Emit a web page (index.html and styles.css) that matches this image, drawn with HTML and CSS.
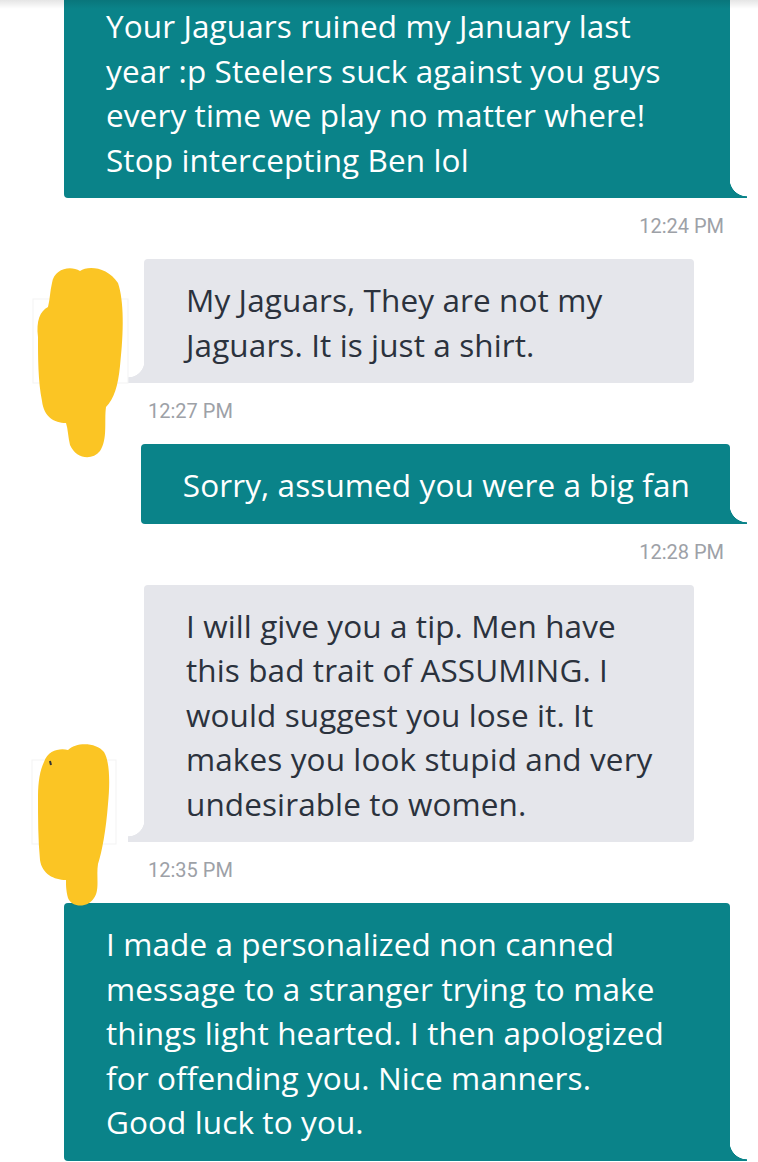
FILE: index.html
```html
<!DOCTYPE html>
<html>
<head>
<meta charset="utf-8">
<link rel="stylesheet" href="styles.css">
</head>
<body>
<div class="shade"></div>
<div class="chat">
  <div class="row out">
    <div class="bubble out first">Your Jaguars ruined my January last<br>year :p Steelers suck against you guys<br>every time we play no matter where!<br>Stop intercepting Ben lol</div>
  </div>
  <div class="time out">12:24 PM</div>

  <div class="row in">
    <svg class="avatar a1" width="100" height="200" viewBox="0 0 100 200">
      <rect x="3" y="38" width="95" height="84" fill="none" stroke="#f3f3f3" stroke-width="1"/>
      <path fill="#fbc524" d="M22 22 C24 8 40 4 50 10 C58 4 78 6 88 22 C94 40 94 70 90 105 C88 125 84 138 76 146 C74 160 78 178 70 190 C62 200 46 198 40 184 C38 176 38 168 36 162 C24 162 14 156 12 140 C8 120 8 96 8 76 C6 60 10 50 18 46 C20 38 20 30 22 22 Z"/>
    </svg>
    <div class="bubble in">My Jaguars, They are not my<br>Jaguars. It is just a shirt.</div>
  </div>
  <div class="time in">12:27 PM</div>

  <div class="row out">
    <div class="bubble out">Sorry, assumed you were a big fan</div>
  </div>
  <div class="time out">12:28 PM</div>

  <div class="row in">
    <svg class="avatar a2" width="90" height="170" viewBox="0 0 90 170">
      <rect x="2" y="20" width="84" height="84" fill="none" stroke="#f3f3f3" stroke-width="1"/>
      <path fill="#fbc524" d="M14 22 C18 10 30 8 38 10 C46 2 66 2 74 12 C80 22 80 44 78 64 C76 90 72 112 68 124 C66 136 70 150 64 158 C58 168 42 168 38 158 C36 150 36 146 36 140 C24 140 12 134 10 120 C8 100 8 78 8 56 C8 42 10 30 14 22 Z"/>
      <path d="M20 21 L21 25" stroke="#333" stroke-width="2"/>
    </svg>
    <div class="bubble in">I will give you a tip. Men have<br>this bad trait of ASSUMING. I<br>would suggest you lose it. It<br>makes you look stupid and very<br>undesirable to women.</div>
  </div>
  <div class="time in">12:35 PM</div>

  <div class="row out">
    <div class="bubble out wide">I made a personalized non canned<br>message to a stranger trying to make<br>things light hearted. I then apologized<br>for offending you. Nice manners.<br>Good luck to you.</div>
  </div>
</div>
</body>
</html>
```
FILE: styles.css
```css
html, body {
  margin: 0;
  padding: 0;
  background: #ffffff;
}
body {
  width: 758px;
  height: 1162px;
  overflow: hidden;
  position: relative;
}
.shade {
  position: absolute;
  left: 0;
  top: 0;
  right: 0;
  height: 9px;
  background: linear-gradient(to bottom, rgba(0,0,0,0.10), rgba(0,0,0,0));
  z-index: 5;
}
.chat {
  display: flex;
  flex-direction: column;
}
.row {
  display: flex;
  position: relative;
}
.row.out {
  justify-content: flex-end;
  padding-right: 28px;
}
.row.in {
  padding-left: 144px;
}
.bubble {
  position: relative;
  font-family: "Open Sans", "Lato", sans-serif;
  font-size: 31.5px;
  letter-spacing: 0.1px;
  line-height: 44.5px;
  padding: 19px 40px 16px 42px;
  border-radius: 4px;
  white-space: nowrap;
  box-sizing: border-box;
}
.bubble.out {
  background: #0a8389;
  color: #ffffff;
  border-bottom-right-radius: 0;
}
.bubble.out::after {
  content: "";
  position: absolute;
  right: -17px;
  bottom: 0;
  width: 17px;
  height: 19px;
  background: radial-gradient(circle at 100% 0, rgba(10,131,137,0) 17px, #0a8389 17.6px);
}
.bubble.first {
  width: 666px;
  margin-top: -15px;
}
.bubble.wide {
  width: 666px;
}
.bubble.in {
  width: 550px;
  background: #e5e6eb;
  color: #2b323d;
  border-bottom-left-radius: 0;
}
.bubble.in::after {
  content: "";
  position: absolute;
  left: -16px;
  bottom: 0;
  width: 16px;
  height: 22px;
  background: radial-gradient(circle at 0 0, rgba(229,230,235,0) 16px, #e5e6eb 16.6px);
}
.avatar {
  position: absolute;
  z-index: 2;
}
.a1 {
  left: 30px;
  top: 2px;
}
.a2 {
  left: 30px;
  top: 155px;
}
.time {
  font-family: "Roboto", "Liberation Sans", sans-serif;
  font-size: 20px;
  line-height: 24px;
  color: #9da1a7;
  margin: 16px 0 21px;
}
.time.out {
  text-align: right;
  padding-right: 34px;
}
.time.in {
  padding-left: 148px;
}
```
